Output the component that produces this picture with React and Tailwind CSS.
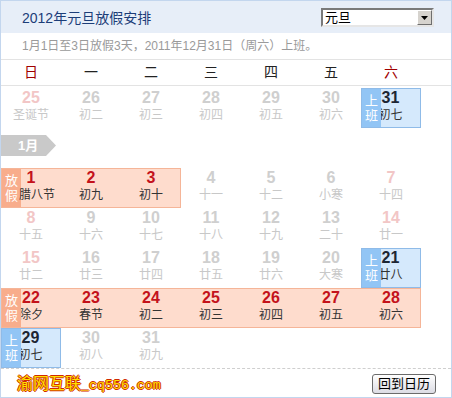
import React from "react";

const dec = [
  { d: 25, l: "圣诞节", k: "dimw" },
  { d: 26, l: "初二", k: "dim" },
  { d: 27, l: "初三", k: "dim" },
  { d: 28, l: "初四", k: "dim" },
  { d: 29, l: "初五", k: "dim" },
  { d: 30, l: "初六", k: "dim" },
  { d: 31, l: "初七", k: "work" },
];

function numColor(k) {
  if (k === "hol") return "text-[#c4121b]";
  if (k === "work") return "text-[#1d2633]";
  if (k === "dimw") return "text-[#f2c6c6]";
  return "text-[#cfcfcf]";
}
function lunColor(k) {
  if (k === "hol" || k === "work") return "text-[#333333]";
  return "text-[#c8c8c8]";
}

function Inner({ d, l, k, shift }) {
  return (
    <div className="flex flex-col items-center h-[40px]">
      <div className={`text-[16px] font-bold leading-[18px] mt-[1px] ${numColor(k)}`}>{d}</div>
      <div className={`text-[12px] leading-[17px] ${lunColor(k)} ${shift ? "translate-x-[6px]" : ""}`}>{l}</div>
    </div>
  );
}

function Tag({ a, b, blue }) {
  return (
    <div
      className={`absolute left-0 top-0 bottom-0 w-[19px] flex flex-col items-center justify-center text-white text-[13px] leading-[15px] ${
        blue ? "bg-[#92c5f5]" : "bg-[#f8ad8c]"
      }`}
    >
      <span>{a}</span>
      <span>{b}</span>
    </div>
  );
}

function Cell({ d, l, k }) {
  if (k === "work") {
    return (
      <div className="relative h-[40px] bg-[#d5e9fc] border border-[#8fbbe8]">
        <Tag a="上" b="班" blue />
        <div className="-mt-[1px] -ml-[1px]">
          <Inner d={d} l={l} k={k} />
        </div>
      </div>
    );
  }
  return <Inner d={d} l={l} k={k} />;
}

function Band({ items, span }) {
  return (
    <div className={`relative h-[40px] bg-[#fedccd] border border-[#f5b598] ${span}`}>
      <Tag a="放" b="假" />
      <div className="-mt-[1px] -ml-[1px] grid grid-cols-[repeat(7,60px)]">
        {items.map((it, i) => (
          <Inner key={i} d={it.d} l={it.l} k="hol" shift={it.l.length === 3} />
        ))}
      </div>
    </div>
  );
}

const jan1 = [
  { d: 4, l: "十一", k: "dim" },
  { d: 5, l: "十二", k: "dim" },
  { d: 6, l: "小寒", k: "dim" },
  { d: 7, l: "十四", k: "dimw" },
];
const jan2 = [
  { d: 8, l: "十五", k: "dimw" },
  { d: 9, l: "十六", k: "dim" },
  { d: 10, l: "十七", k: "dim" },
  { d: 11, l: "十八", k: "dim" },
  { d: 12, l: "十九", k: "dim" },
  { d: 13, l: "二十", k: "dim" },
  { d: 14, l: "廿一", k: "dimw" },
];
const jan3 = [
  { d: 15, l: "廿二", k: "dimw" },
  { d: 16, l: "廿三", k: "dim" },
  { d: 17, l: "廿四", k: "dim" },
  { d: 18, l: "廿五", k: "dim" },
  { d: 19, l: "廿六", k: "dim" },
  { d: 20, l: "大寒", k: "dim" },
  { d: 21, l: "廿八", k: "work" },
];
const jan4 = [
  { d: 22, l: "除夕" },
  { d: 23, l: "春节" },
  { d: 24, l: "初二" },
  { d: 25, l: "初三" },
  { d: 26, l: "初四" },
  { d: 27, l: "初五" },
  { d: 28, l: "初六" },
];
const jan5 = [
  { d: 29, l: "初七", k: "work" },
  { d: 30, l: "初八", k: "dim" },
  { d: 31, l: "初九", k: "dim" },
];

const weekdays = ["日", "一", "二", "三", "四", "五", "六"];

export default function App() {
  return (
    <div className="w-[452px] h-[398px] bg-white border border-[#c3d6ee] overflow-hidden font-['Liberation_Sans','Noto_Sans_CJK_SC',sans-serif]">
      <div className="h-[32px] bg-[#e7eef8] flex items-center justify-between pl-[21px] pr-[17px]">
        <div className="text-[14px] text-[#1c3d78] pt-[2px]">2012年元旦放假安排</div>
        <div className="w-[113px] h-[19px] mt-[1px] flex bg-white border-2 border-t-[#7a7a7a] border-l-[#7a7a7a] border-r-[#e6e6e6] border-b-[#e6e6e6]">
          <div className="flex-1 text-[13px] leading-[15px] text-black pl-[2px]">元旦</div>
          <div className="w-[15px] h-[15px] bg-[#d6d3ce] border border-t-white border-l-white border-r-[#6e6e6e] border-b-[#6e6e6e] flex items-center justify-center">
            <svg width="7" height="4" viewBox="0 0 7 4">
              <path d="M0 0h7L3.5 4z" fill="#000" />
            </svg>
          </div>
        </div>
      </div>
      <div className="h-[27px] border-b border-[#e3e3e3] pl-[21px] flex items-center text-[12px] text-[#9a9a9a]">
        1月1日至3日放假3天，2011年12月31日（周六）上班。
      </div>
      <div className="h-[26px] border-b border-[#e3e3e3] grid grid-cols-[repeat(7,60px)] items-center">
        {weekdays.map((w, i) => (
          <div
            key={w}
            className={`text-center text-[14px] ${i === 0 || i === 6 ? "text-[#a00000]" : "text-[#222]"}`}
          >
            {w}
          </div>
        ))}
      </div>
      <div className="mt-[2px] grid grid-cols-[repeat(7,60px)]">
        {dec.map((c) => (
          <Cell key={c.d} {...c} />
        ))}
      </div>
      <div className="h-[40px] pt-[7px]">
        <div className="relative w-[56px] h-[21px] -ml-[1px]">
          <svg className="absolute inset-0" width="56" height="21" viewBox="0 0 56 21">
            <path d="M0 0H46L56 10.5L46 21H0Z" fill="#c9c9c9" />
          </svg>
          <div className="relative pl-[18px] text-[13px] font-bold leading-[21px] text-white">1月</div>
        </div>
      </div>
      <div className="grid grid-cols-[repeat(7,60px)]">
        <Band span="col-span-3" items={[{ d: 1, l: "腊八节" }, { d: 2, l: "初九" }, { d: 3, l: "初十" }]} />
        {jan1.map((c) => (
          <Cell key={c.d} {...c} />
        ))}
        {jan2.map((c) => (
          <Cell key={c.d} {...c} />
        ))}
        {jan3.map((c) => (
          <Cell key={c.d} {...c} />
        ))}
        <Band span="col-span-7" items={jan4} />
        {jan5.map((c) => (
          <Cell key={c.d} {...c} />
        ))}
      </div>
      <div className="border-t border-dashed border-[#cfcfcf]" />
      <div className="h-[28px] flex items-center justify-between pl-[16px] pr-[15px]">
        <div className="text-[16px] text-[#ffe100] [text-shadow:1px_0_0_#d02a00,-1px_0_0_#d02a00,0_1px_0_#d02a00,0_-1px_0_#d02a00] font-['SimSun','Noto_Sans_CJK_SC',sans-serif]">
          渝网互联<span className="font-['Liberation_Mono',monospace] text-[13.3px]">_cq556.com</span>
        </div>
        <button className="w-[64px] h-[20px] mt-[2px] border border-[#6b6b6b] rounded-[3px] bg-gradient-to-b from-[#ffffff] to-[#dcdce4] text-[13px] leading-[18px] text-black">
          回到日历
        </button>
      </div>
    </div>
  );
}
